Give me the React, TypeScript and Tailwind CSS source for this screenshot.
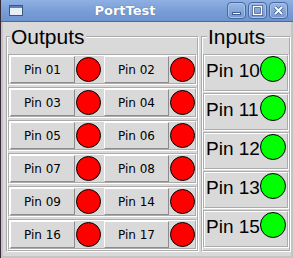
import React from 'react';

const outputs: [string, string][] = [
  ['01', '02'],
  ['03', '04'],
  ['05', '06'],
  ['07', '08'],
  ['09', '14'],
  ['16', '17'],
];

const inputs = ['10', '11', '12', '13', '15'];

function PinButton({ pin }: { pin: string }) {
  return (
    <button className="flex h-[27px] w-[65px] items-center justify-center border border-t-white border-l-white border-r-[#8c8c8c] border-b-[#8c8c8c] bg-[#d9d9d9] font-['DejaVu_Sans',sans-serif] text-[12px] text-black">
      Pin {pin}
    </button>
  );
}

function Led({ on }: { on: boolean }) {
  return (
    <div
      className={`h-[25px] w-[25px] shrink-0 rounded-full border border-black ${on ? 'bg-[#00ff00]' : 'bg-[#ff0000]'}`}
    />
  );
}

function TitleButton({ kind }: { kind: 'min' | 'max' | 'close' }) {
  return (
    <div className="flex h-[17px] w-[19px] items-center justify-center rounded-[4px] border border-[#48689f] bg-gradient-to-b from-[#9ab8e6] to-[#7497cf] shadow-[inset_0_0_0_1px_#a9c3ea]">
      <svg width="11" height="11" viewBox="0 0 11 11">
        {kind === 'min' && (
          <rect x="1.5" y="7.5" width="8" height="2" fill="#fff" stroke="#3d5c92" strokeWidth="1" />
        )}
        {kind === 'max' && (
          <g>
            <rect x="1.5" y="1.5" width="8" height="8" fill="none" stroke="#3d5c92" strokeWidth="3" />
            <rect x="1.5" y="1.5" width="8" height="8" fill="none" stroke="#fff" strokeWidth="1.4" />
          </g>
        )}
        {kind === 'close' && (
          <g>
            <path d="M2 2 L9 9 M9 2 L2 9" stroke="#3d5c92" strokeWidth="3.6" />
            <path d="M2 2 L9 9 M9 2 L2 9" stroke="#fff" strokeWidth="2" />
          </g>
        )}
      </svg>
    </div>
  );
}

export default function App() {
  return (
    <div className="flex h-[258px] w-[293px] flex-col border-l border-[#352b38] bg-[#d9d9d9]">
      {/* title bar */}
      <div className="flex h-[22px] items-center border-b border-[#4a69a0] bg-gradient-to-b from-[#8fb0e2] via-[#7a9ed7] to-[#6d93cf] pl-[8px] pr-[5px]">
        <div className="h-[11px] w-[14px] border border-[#40567a] bg-[#e8eef8] shadow-[inset_0_2px_0_#5a7fc0]" />
        <div className="flex-1 text-center font-['DejaVu_Sans',sans-serif] text-[13px] font-bold text-white [text-shadow:0_0_1px_#3b5a90]">
          PortTest
        </div>
        <div className="flex gap-[2px]">
          <TitleButton kind="min" />
          <TitleButton kind="max" />
          <TitleButton kind="close" />
        </div>
      </div>

      {/* body */}
      <div className="flex flex-1 items-start gap-[2px] border-x-2 border-b-2 border-x-[#c4c4c4] border-b-[#c4c4c4] pl-[3px] pt-[4px]">
        <fieldset className="h-[226px] w-[192px] border-2 border-white [border-style:groove]">
          <legend className="ml-[2px] px-px font-['Liberation_Sans',sans-serif] text-[21px] leading-[22px] text-black">
            Outputs
          </legend>
          <div className="flex flex-col gap-[2px] pt-[6px]">
            {outputs.map(([a, b]) => (
              <div
                key={a}
                className="flex h-[31px] items-center gap-[1px] border-2 border-white [border-style:groove]"
              >
                <PinButton pin={a} />
                <Led on={false} />
                <div className="w-[1px]" />
                <PinButton pin={b} />
                <Led on={false} />
              </div>
            ))}
          </div>
        </fieldset>

        <fieldset className="h-[226px] w-[90px] border-2 border-white [border-style:groove]">
          <legend className="ml-[4px] px-px font-['Liberation_Sans',sans-serif] text-[21px] leading-[22px] text-black">
            Inputs
          </legend>
          <div className="flex flex-col gap-[1px] pt-[6px]">
            {inputs.map((p) => (
              <div
                key={p}
                className="flex h-[38px] items-start justify-between border-2 border-white pl-[1px] pr-[1px] [border-style:groove]"
              >
                <span className="mt-[4px] font-['Liberation_Sans',sans-serif] text-[19px] leading-[22px] text-black">
                  Pin {p}
                </span>
                <div className="h-[26px] w-[26px] shrink-0 rounded-full border border-black bg-[#00ff00]" />
              </div>
            ))}
          </div>
        </fieldset>
      </div>
    </div>
  );
}
